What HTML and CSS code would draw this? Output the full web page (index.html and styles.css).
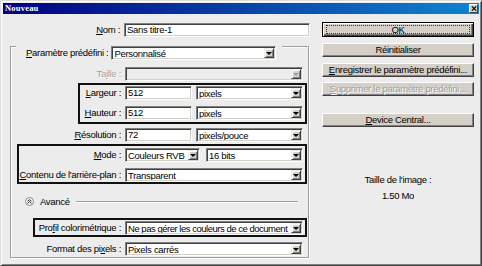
FILE: index.html
```html
<!DOCTYPE html>
<html lang="fr">
<head>
<meta charset="utf-8">
<title>Nouveau</title>
<link rel="stylesheet" href="styles.css">
</head>
<body>
<div class="win">
  <div class="titlebar">
    <span class="title">Nouveau</span>
    <span class="close"><svg width="8" height="7" viewBox="0 0 8 7"><path d="M1 0.5 L7 6.5 M7 0.5 L1 6.5" stroke="#000" stroke-width="1.6" fill="none"/></svg></span>
  </div>
  <div class="content">
    <div class="left">
      <div class="row row-nom">
        <span class="lbl"><u>N</u>om :</span>
        <div class="field w186">Sans titre-1</div>
      </div>
      <div class="group">
        <div class="group-head">
          <span class="lbl-head"><u>P</u>aramètre prédéfini :</span>
          <div class="select w165"><span class="val">Personnalisé</span><span class="arrow"><span class="tri"></span></span></div>
        </div>
        <div class="row row-taille">
          <span class="lbl disabled">Ta<u>i</u>lle :</span>
          <div class="select w178 is-disabled"><span class="val"></span><span class="arrow"><span class="tri"></span></span></div>
        </div>
        <div class="box box1">
          <div class="row row-larg">
            <span class="lbl"><u>L</u>argeur :</span>
            <div class="field w67">512</div>
            <div class="select w107"><span class="val">pixels</span><span class="arrow"><span class="tri"></span></span></div>
          </div>
          <div class="row row-haut">
            <span class="lbl"><u>H</u>auteur :</span>
            <div class="field w67">512</div>
            <div class="select w107"><span class="val">pixels</span><span class="arrow"><span class="tri"></span></span></div>
          </div>
        </div>
        <div class="row row-res">
          <span class="lbl"><u>R</u>ésolution :</span>
          <div class="field w67">72</div>
          <div class="select w107"><span class="val">pixels/pouce</span><span class="arrow"><span class="tri"></span></span></div>
        </div>
        <div class="box box2">
          <div class="row row-mode">
            <span class="lbl"><u>M</u>ode :</span>
            <div class="select w75"><span class="val">Couleurs RVB</span><span class="arrow"><span class="tri"></span></span></div>
            <div class="select w97"><span class="val">16 bits</span><span class="arrow"><span class="tri"></span></span></div>
          </div>
          <div class="row row-cont">
            <span class="lbl"><u>C</u>ontenu de l'arrière-plan :</span>
            <div class="select w178"><span class="val">Transparent</span><span class="arrow"><span class="tri"></span></span></div>
          </div>
        </div>
        <div class="adv">
          <span class="adv-icon"><svg width="9" height="9" viewBox="0 0 9 9"><circle cx="4.5" cy="4.5" r="4" fill="#f6f6f6" stroke="#8a8a8a" stroke-width="1"/><path d="M2.6 4.3 L4.5 2.6 L6.4 4.3 M2.6 6.4 L4.5 4.7 L6.4 6.4" stroke="#222" stroke-width="1" fill="none"/></svg></span>
          <span class="adv-text">Avancé</span>
          <span class="adv-line"></span>
        </div>
        <div class="box box3">
          <div class="row row-prof">
            <span class="lbl">Pro<u>f</u>il colorimétrique :</span>
            <div class="select w178"><span class="val tight">Ne pas gérer les couleurs de ce document</span><span class="arrow"><span class="tri"></span></span></div>
          </div>
        </div>
        <div class="row row-fmt">
          <span class="lbl">Format des pi<u>x</u>els :</span>
          <div class="select w178"><span class="val">Pixels carrés</span><span class="arrow"><span class="tri"></span></span></div>
        </div>
      </div>
    </div>
    <div class="right">
      <div class="btn btn-ok"><span class="focus">OK</span></div>
      <div class="btn btn-reset">Réinitialiser</div>
      <div class="btn btn-save"><u>E</u>nregistrer le paramètre prédéfini...</div>
      <div class="btn btn-del is-disabled"><u>S</u>upprimer le paramètre prédéfini...</div>
      <div class="btn btn-dev"><u>D</u>evice Central...</div>
      <div class="info info-title">Taille de l'image :</div>
      <div class="info info-val">1.50 Mo</div>
    </div>
  </div>
</div>
</body>
</html>
```

FILE: styles.css
```css
* { box-sizing: border-box; }
html, body { margin: 0; padding: 0; background: #ececec; }
body {
  font-family: "Liberation Sans", Arial, sans-serif;
  font-size: 9.5px;
  letter-spacing: -0.3px;
  color: #000;
}
u { text-decoration: underline; text-underline-offset: 1px; }

.win {
  width: 482px;
  height: 266px;
  background: #ececec;
  border: 1px solid;
  border-color: #dcdcdc #404040 #404040 #dcdcdc;
  box-shadow: inset 1px 1px 0 #fff, inset -1px -1px 0 #808080;
  padding: 2px;
  overflow: hidden;
}

.titlebar {
  height: 11px;
  background: linear-gradient(to right, #000080, #1084d0);
  display: flex;
  align-items: center;
  justify-content: space-between;
  padding: 0 2px 0 2px;
}
.title {
  font-family: "Liberation Serif", serif;
  font-weight: bold;
  font-size: 8.5px;
  color: #fff;
  line-height: 11px;
  letter-spacing: 0.2px;
}
.close {
  width: 9px;
  height: 9px;
  background: #d4d0c8;
  border: 1px solid;
  border-color: #fff #404040 #404040 #fff;
  display: flex;
  align-items: center;
  justify-content: center;
  margin-right: -1px;
}
.close svg { display: block; width: 6px; height: 5px; }

.content { display: flex; }
.left { width: 316px; padding-top: 9px; }
.right { width: 152px; margin-left: 3px; padding-top: 8px; display: flex; flex-direction: column; }

/* rows */
.row { display: flex; align-items: center; height: 14px; }
.lbl { flex: 1; min-width: 0; text-align: right; margin-right: 4px; white-space: nowrap; line-height: 14px; }
.lbl.disabled { color: #a0a0a0; text-shadow: 1px 1px 0 #fff; }

.row-nom { width: 307px; }

/* fields */
.field, .select {
  height: 14px;
  flex: none;
  background: #fff;
  border: 1px solid;
  border-color: #808080 #fff #fff #808080;
  box-shadow: inset 1px 1px 0 #404040, inset -1px -1px 0 #d4d0c8;
  line-height: 12px;
  padding-left: 2px;
  white-space: nowrap;
  overflow: hidden;
}
.select { display: flex; padding-right: 1px; padding-top: 1px; padding-bottom: 1px; }
.select .val { flex: 1; min-width: 0; overflow: hidden; line-height: 11px; }
.select .val.tight { letter-spacing: -0.48px; }
.arrow {
  width: 10px;
  height: 10px;
  background: #d4d0c8;
  border: 1px solid;
  border-color: #eaeaea #404040 #404040 #eaeaea;
  box-shadow: inset 1px 1px 0 #fff, inset -1px -1px 0 #808080;
  display: flex;
  align-items: center;
  justify-content: center;
  flex: none;
}
.tri {
  width: 0; height: 0;
  border-left: 3px solid transparent;
  border-right: 3px solid transparent;
  border-top: 3px solid #000;
  margin-top: 1px;
}
.select.is-disabled { background: #ececec; }
.select.is-disabled .tri { border-top-color: #a0a0a0; }

.w186 { width: 186px; }
.w165 { width: 165px; }
.w178 { width: 178px; }
.w67 { width: 67px; }
.w107 { width: 107px; margin-left: 4px; }
.w75 { width: 75px; }
.w97 { width: 97px; margin-left: 6px; }

/* group (etched frame) */
.group {
  margin-left: 7px;
  width: 299px;
  margin-top: 9px;
  border: 1px solid #a0a0a0;
  box-shadow: inset 1px 1px 0 #fff, 1px 1px 0 #fff;
  padding-bottom: 1px;
}
.group-head {
  display: inline-flex;
  align-items: center;
  margin-top: -6px;
  margin-left: 5px;
  padding: 0 6px 0 10px;
  background: #ececec;
  height: 14px;
}
.lbl-head { margin-right: 3px; line-height: 14px; white-space: nowrap; }
.group-head .select { width: 165px; }

.row-taille { margin-top: 7px; margin-right: 5px; }

/* black boxes */
.box { border: 2px solid #111; }
.box1 { margin: 2px 1px 0 67px; padding: 1px 2px 2px 0; }
.row-haut { margin-top: 6px; }
.row-res { margin-top: 4px; margin-right: 5px; }
.box2 { margin: 2px 1px 0 6px; padding: 2px 2px 0 0; }
.row-cont { margin-top: 6px; }
.box3 { margin: 11px 1px 0 22px; padding: 1px 2px 0 0; }
.row-fmt { margin-top: 5px; margin-right: 5px; }

/* advanced */
.adv { display: flex; align-items: center; height: 11px; margin-top: 12px; margin-left: 14px; }
.adv-icon { width: 9px; height: 9px; flex: none; }
.adv-icon svg { display: block; }
.adv-text { margin-left: 6px; line-height: 11px; }
.adv-line {
  flex: 1;
  height: 2px;
  border-top: 1px solid #a0a0a0;
  border-bottom: 1px solid #fff;
  margin: 0 10px 0 6px;
}

/* buttons */
.btn {
  height: 14px;
  background: #d4d0c8;
  border: 1px solid;
  border-color: #fff #404040 #404040 #fff;
  box-shadow: inset -1px -1px 0 #808080;
  text-align: center;
  line-height: 12px;
  white-space: nowrap;
  overflow: hidden;
}
.btn-ok {
  height: 15px;
  border: 1px solid #000;
  box-shadow: inset 1px 1px 0 #fff, inset -1px -1px 0 #404040, inset -2px -2px 0 #808080;
  padding: 2px 3px;
  line-height: 9px;
}
.btn-ok .focus {
  display: block;
  height: 9px;
  border: 1px dotted #333;
  line-height: 8px;
}
.btn-reset { margin-top: 6px; }
.btn-save { margin-top: 6px; }
.btn-del { margin-top: 5px; color: #a0a0a0; text-shadow: 1px 1px 0 #fff; }
.btn-dev { margin-top: 17px; }

.info { text-align: center; line-height: 12px; }
.info-title { margin-top: 47px; }
.info-val { margin-top: 4px; }
```
